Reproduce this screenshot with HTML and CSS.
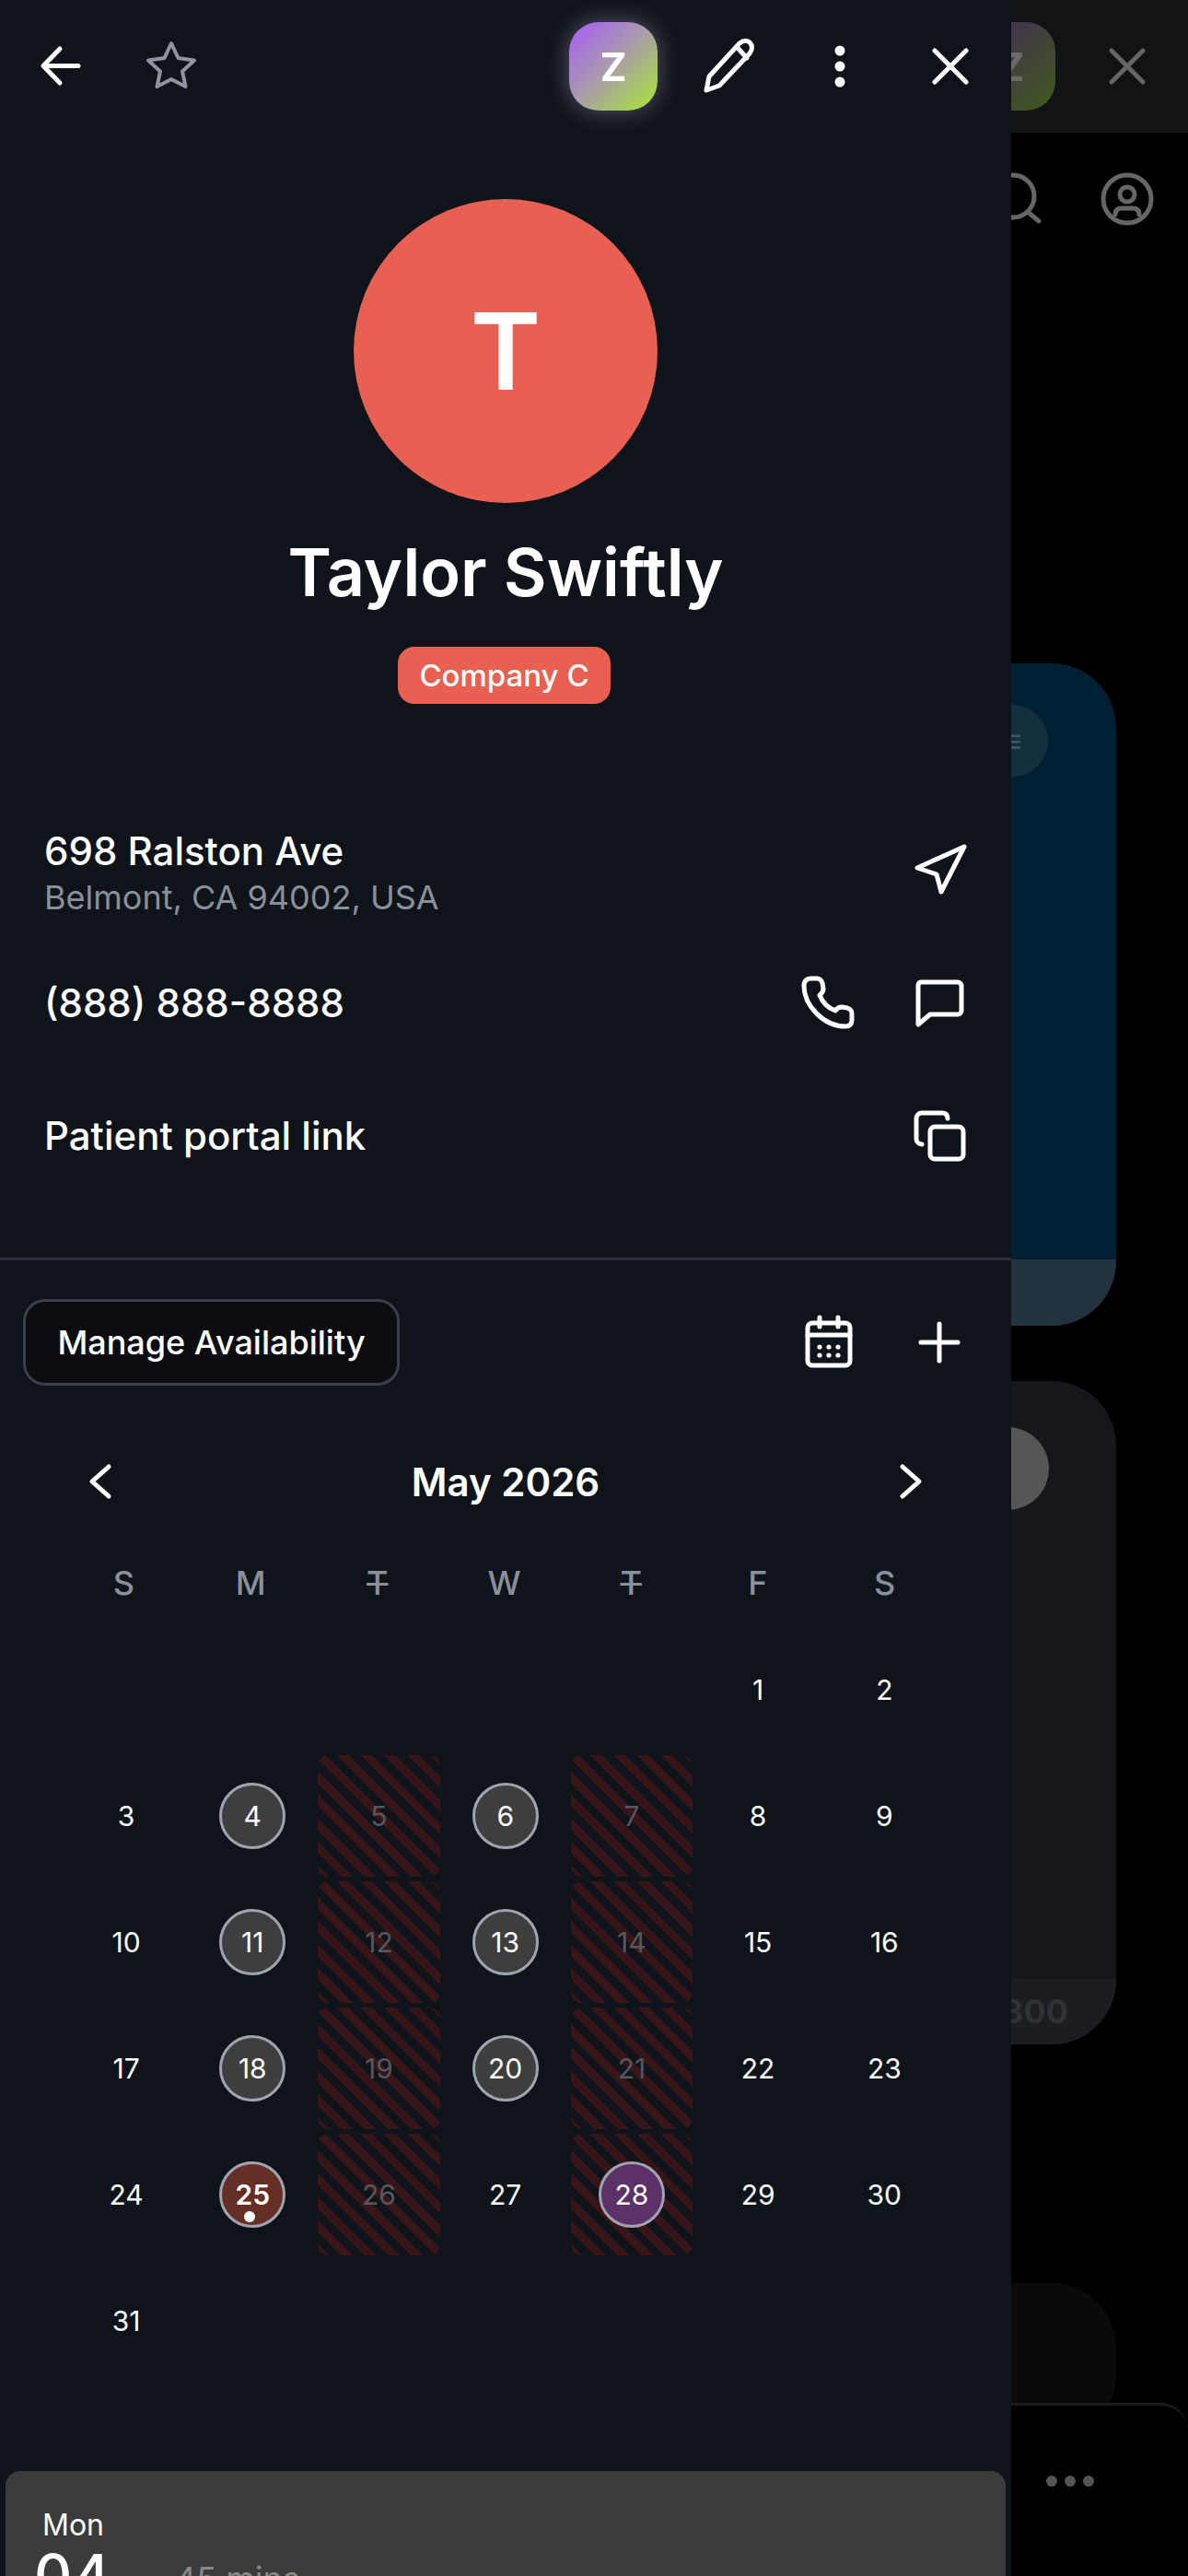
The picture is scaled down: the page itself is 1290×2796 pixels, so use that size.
FILE: index.html
```html
<!DOCTYPE html>
<html lang="en">

<head>
  <link rel="stylesheet" href="styles.css">
</head>

<body>
  <div class="backPage">
    <div class="backTop">
      <div class="ghostTile">Z</div>
      <svg class="ghostClose" width="72" height="72" viewBox="0 0 72 72"><path d="M19 19L53 53M53 19L19 53" /></svg>
    </div>
    <div class="backTools">
      <svg width="72" height="72" viewBox="0 0 72 72"><circle cx="32" cy="33" r="23" /><path d="M48 50L60 60" /></svg>
      <svg width="72" height="72" viewBox="0 0 72 72"><circle cx="36" cy="36" r="26" /><circle cx="36" cy="31" r="8" /><path d="M23 53Q23 46 30 46H42Q49 46 49 53" /></svg>
    </div>
    <div class="card blueCard">
      <div class="blueBody"><div class="chip">≡</div></div>
      <div class="blueFoot"></div>
    </div>
    <div class="card greyCard">
      <div class="greyBody"><div class="greyDot"></div></div>
      <div class="greyFoot">$1,300</div>
    </div>
    <div class="card darkCard"></div>
    <div class="backNav"><span></span><span></span><span></span></div>
  </div>

  <div class="panel">
    <div class="topBar">
      <svg class="icon" viewBox="0 0 72 72"><path d="M55 35.5H18M35 17L17 35.5L35 54" /></svg>
      <svg class="icon starIcon" viewBox="0 0 72 72"><path d="M36 11L43.5 27L61 29.5L48 41.5L51.5 58L36 50L20.5 58L24 41.5L11 29.5L28.5 27Z" /></svg>
      <div class="zTile">Z</div>
      <svg class="icon" viewBox="0 0 72 72"><path d="M11 62L25 57L58 22Q63 15 58 10Q53 6 47 11L14 47ZM45 16L55 27" /></svg>
      <svg class="icon" viewBox="0 0 72 72"><circle class="solid" cx="36" cy="19" r="5.5" /><circle class="solid" cx="36" cy="36" r="5.5" /><circle class="solid" cx="36" cy="53" r="5.5" /></svg>
      <svg class="icon" viewBox="0 0 72 72"><path d="M19 19L53 53M53 19L19 53" /></svg>
    </div>

    <div class="profile">
      <div class="avatar">T</div>
      <h1>Taylor Swiftly</h1>
      <div class="badge">Company C</div>
    </div>

    <div class="infoRow addressRow">
      <div class="addressText">
        <div class="infoText">698 Ralston Ave</div>
        <div class="subText">Belmont, CA 94002, USA</div>
      </div>
      <svg class="icon navIcon" viewBox="0 0 72 72"><path d="M63 12L12 35L33 42L38 61Z" /></svg>
    </div>
    <div class="infoRow">
      <div class="infoText">(888) 888-8888</div>
      <div class="rowIcons">
        <svg class="icon" viewBox="0 0 72 72"><path d="M17 9h6c3 0 5 2 6 5l1 6c0 3-1 5-4 7c3 8 9 14 17 17c2-3 4-4 7-4l6 1c3 1 5 3 5 6v7c0 4-2 7-7 7C30 61 9 38 9 17c0-5 3-8 8-8z" /></svg>
        <svg class="icon" viewBox="0 0 72 72"><path d="M16 13H56a4 4 0 0 1 4 4V44a4 4 0 0 1-4 4H26L13 59V17a4 4 0 0 1 3-4Z" /></svg>
      </div>
    </div>
    <div class="infoRow">
      <div class="infoText">Patient portal link</div>
      <svg class="icon" viewBox="0 0 72 72"><rect x="26" y="26" width="36" height="35" rx="5" /><path d="M45 17Q45 11 39 11H17a6 6 0 0 0-6 6V39a6 6 0 0 0 6 6" /></svg>
    </div>

    <div class="availRow">
      <div class="availBtn">Manage Availability</div>
      <div class="rowIcons">
        <svg class="icon" viewBox="0 0 72 72"><rect x="13" y="15" width="46" height="46" rx="5" /><path d="M13 28H59M26 9V19M46 9V19" /><g class="solid"><circle cx="26" cy="41" r="2.6" /><circle cx="36" cy="41" r="2.6" /><circle cx="46" cy="41" r="2.6" /><circle cx="26" cy="50" r="2.6" /><circle cx="36" cy="50" r="2.6" /><circle cx="46" cy="50" r="2.6" /></g></svg>
        <svg class="icon" viewBox="0 0 72 72"><path d="M36 16V56M16 36H56" /></svg>
      </div>
    </div>

    <div class="monthRow">
      <svg class="icon" viewBox="0 0 72 72"><path d="M46 20L28 36L46 52" /></svg>
      <div class="monthName">May 2026</div>
      <svg class="icon" viewBox="0 0 72 72"><path d="M26 20L44 36L26 52" /></svg>
    </div>

    <div class="weekDays">
      <span>S</span><span>M</span><span class="struck">T</span><span>W</span><span class="struck">T</span><span>F</span><span>S</span>
    </div>

    <div class="calendar">
      <div></div><div></div><div></div><div></div><div></div>
      <div class="day">1</div><div class="day">2</div>

      <div class="day">3</div>
      <div class="day"><b class="ring">4</b></div>
      <div class="day off">5</div>
      <div class="day"><b class="ring">6</b></div>
      <div class="day off">7</div>
      <div class="day">8</div>
      <div class="day">9</div>

      <div class="day">10</div>
      <div class="day"><b class="ring">11</b></div>
      <div class="day off">12</div>
      <div class="day"><b class="ring">13</b></div>
      <div class="day off">14</div>
      <div class="day">15</div>
      <div class="day">16</div>

      <div class="day">17</div>
      <div class="day"><b class="ring">18</b></div>
      <div class="day off">19</div>
      <div class="day"><b class="ring">20</b></div>
      <div class="day off">21</div>
      <div class="day">22</div>
      <div class="day">23</div>

      <div class="day">24</div>
      <div class="day"><b class="ring today">25<i class="todayDot"></i></b></div>
      <div class="day off">26</div>
      <div class="day">27</div>
      <div class="day off"><b class="ring picked">28</b></div>
      <div class="day">29</div>
      <div class="day">30</div>

      <div class="day">31</div>
    </div>

    <div class="apptCard">
      <div class="apptDate">
        <div class="apptDay">Mon</div>
        <div class="apptNum">04</div>
      </div>
      <div class="apptLen">45 mins</div>
    </div>
  </div>
</body>

</html>
```
FILE: styles.css
```css
html,
body {
  margin: 0;
  padding: 0;
  height: 2796px;
  overflow: hidden;
  background: #000;
  font-family: Inter, "Liberation Sans", sans-serif;
  color: #fff;
}

/* page dimmed behind the drawer */
.backPage {
  width: 1290px;
  height: 2796px;
  overflow: hidden;
}

.backTop {
  height: 144px;
  background: #121315;
  display: flex;
  justify-content: flex-end;
  align-items: center;
  padding-right: 30px;
  gap: 42px;
  box-sizing: border-box;
}

.ghostTile {
  width: 96px;
  height: 96px;
  border-radius: 32px;
  background: linear-gradient(135deg, #43295c, #3f5a1c);
  color: #6a6a66;
  font-size: 43px;
  font-weight: 700;
  display: flex;
  align-items: center;
  justify-content: center;
}

.backTop svg,
.backTools svg {
  fill: none;
  stroke: #666;
  stroke-width: 5;
  stroke-linecap: round;
}

.backTools {
  height: 72px;
  padding: 36px 30px 0 0;
  display: flex;
  justify-content: flex-end;
  gap: 48px;
}

.card {
  margin-left: 78px;
  width: 1134px;
  border-radius: 70px;
  overflow: hidden;
}

.blueCard {
  margin-top: 468px;
  height: 719px;
  background: #022033;
  display: flex;
  flex-direction: column;
}

.blueBody {
  height: 647px;
  padding: 45px 0 0 982px;
  box-sizing: border-box;
}

.chip {
  width: 78px;
  height: 78px;
  border-radius: 50%;
  background: #12303e;
  color: #3d5663;
  font-size: 36px;
  line-height: 78px;
  text-align: center;
}

.blueFoot {
  flex: 1;
  background: #22333d;
}

.greyCard {
  margin-top: 60px;
  height: 720px;
  background: #15171a;
  display: flex;
  flex-direction: column;
}

.greyBody {
  height: 649px;
  padding: 50px 0 0 971px;
  box-sizing: border-box;
}

.greyDot {
  width: 90px;
  height: 90px;
  border-radius: 50%;
  background: #565656;
}

.greyFoot {
  flex: 1;
  background: #1b1d20;
  color: #2f3134;
  font-size: 36px;
  font-weight: 700;
  line-height: 71px;
  padding-left: 960px;
}

.darkCard {
  margin-top: 259px;
  height: 170px;
  background: #0c090b;
}

.backNav {
  margin-top: -40px;
  position: relative;
  height: 188px;
  width: 1290px;
  box-sizing: border-box;
  background: #000;
  border-top: 3px solid #1c1c1e;
  border-top-right-radius: 30px;
  display: flex;
  gap: 8px;
  justify-content: flex-end;
  padding: 76px 102px 0 0;
}

.backNav span {
  width: 12px;
  height: 12px;
  border-radius: 50%;
  background: #555;
}

/* drawer */
.panel {
  position: absolute;
  left: 0;
  top: 0;
  width: 1098px;
  height: 2796px;
  overflow: hidden;
  background: #0f141a;
}

.icon {
  width: 72px;
  height: 72px;
  flex: none;
  fill: none;
  stroke: #fff;
  stroke-width: 5;
  stroke-linecap: round;
  stroke-linejoin: round;
}

.solid {
  fill: #fff;
  stroke: none;
}

.topBar {
  height: 144px;
  padding: 0 30px;
  box-sizing: border-box;
  display: flex;
  align-items: center;
  gap: 48px;
}

.starIcon {
  stroke: #8f93a0;
  stroke-width: 4;
}

.zTile {
  margin-left: auto;
  margin-right: -6px;
  width: 96px;
  height: 96px;
  border-radius: 32px;
  background: linear-gradient(135deg, #a865ec 8%, #aa9fa6 50%, #a6dc42 92%);
  box-shadow: 0 0 26px rgba(205, 190, 235, 0.4);
  font-size: 43px;
  font-weight: 700;
  display: flex;
  align-items: center;
  justify-content: center;
}

.profile {
  display: flex;
  flex-direction: column;
  align-items: center;
  padding-top: 72px;
}

.avatar {
  width: 330px;
  height: 330px;
  border-radius: 50%;
  background: #e76051;
  font-size: 116px;
  font-weight: 600;
  line-height: 330px;
  text-align: center;
}

.profile h1 {
  margin: 31px 0 0;
  font-size: 72px;
  line-height: 88px;
  font-weight: 600;
}

.badge {
  margin-top: 37px;
  margin-right: 3px;
  height: 62px;
  width: 231px;
  border-radius: 18px;
  background: #e76051;
  font-size: 33px;
  font-weight: 500;
  line-height: 62px;
  text-align: center;
}

.infoRow {
  height: 144px;
  padding: 0 42px 0 48px;
  display: flex;
  align-items: center;
  justify-content: space-between;
}

.addressRow {
  margin-top: 109px;
}

.addressText {
  padding-top: 5px;
}

.navIcon {
  margin-top: -4px;
}

.infoText {
  font-size: 42px;
  font-weight: 500;
  line-height: 50px;
}

.subText {
  font-size: 36px;
  line-height: 46px;
  margin-top: 2px;
  color: #8a8f9c;
}

.rowIcons {
  display: flex;
  gap: 48px;
}

.availRow {
  margin-top: 60px;
  border-top: 3px solid #2b2f3c;
  padding: 42px 42px 0 25px;
  display: flex;
  align-items: center;
  justify-content: space-between;
}

.availBtn {
  height: 94px;
  width: 409px;
  box-sizing: border-box;
  border: 3px solid #3a3f4d;
  border-radius: 24px;
  background: #0b0d11;
  font-size: 36px;
  font-weight: 500;
  line-height: 88px;
  text-align: center;
}

.monthRow {
  margin-top: 68px;
  height: 72px;
  padding: 0 72px;
  display: flex;
  align-items: center;
  justify-content: space-between;
}

.monthName {
  font-size: 42px;
  font-weight: 600;
}

.weekDays {
  margin: 38px 71px 0 68px;
  height: 72px;
  display: grid;
  grid-template-columns: repeat(7, 1fr);
  column-gap: 5px;
  align-items: center;
  text-align: center;
  font-size: 36px;
  font-weight: 500;
  color: #8a8f9c;
}

.struck {
  text-decoration: line-through;
}

.calendar {
  margin: 14px 71.6px 0 71px;
  display: grid;
  grid-template-columns: repeat(7, 1fr);
  grid-auto-rows: 132px;
  gap: 5px;
}

.day {
  display: flex;
  align-items: center;
  justify-content: center;
  font-size: 30px;
  border-radius: 12px;
}

.off {
  color: #55585f;
  background: repeating-linear-gradient(45deg, #371519 0 9px, transparent 9px 18px);
}

.ring {
  position: relative;
  width: 72px;
  height: 72px;
  box-sizing: border-box;
  border: 3px solid #a0a4b0;
  border-radius: 50%;
  background: #3e3e3e;
  color: #fff;
  font-weight: 400;
  display: flex;
  align-items: center;
  justify-content: center;
}

.today {
  background: #662f25;
  font-weight: 600;
}

.todayDot {
  position: absolute;
  left: 24px;
  bottom: 3px;
  width: 12px;
  height: 12px;
  border-radius: 50%;
  background: #fff;
}

.picked {
  background: #5b3168;
}

.apptCard {
  margin: 97px 6px 0;
  height: 300px;
  padding: 40px 34px;
  box-sizing: border-box;
  border-radius: 16px;
  background: #3b3b3b;
  display: flex;
}

.apptDate {
  width: 150px;
}

.apptDay {
  font-size: 32px;
  line-height: 38px;
  padding-left: 6px;
}

.apptNum {
  font-size: 64px;
  font-weight: 500;
  line-height: 72px;
  margin-left: -3px;
}

.apptLen {
  margin-top: 55px;
  font-size: 36px;
  color: #888;
}
```
